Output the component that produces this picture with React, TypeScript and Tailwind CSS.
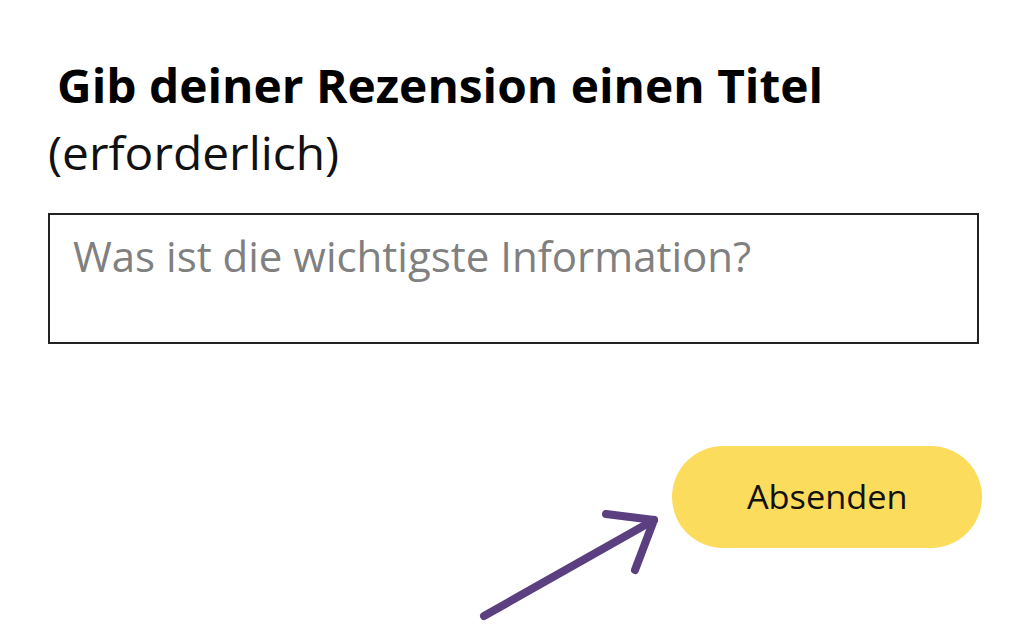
export default function App() {
  return (
    <div
      className="relative w-[1024px] h-[641px] overflow-hidden bg-white pl-[48px] pt-[59px]"
      style={{ fontFamily: '"Open Sans", "Noto Sans", sans-serif' }}
    >
      <h1 className="ml-[9px] text-[46px] font-bold leading-[52px] text-black">
        <span className="inline-block origin-left scale-x-[1.04] whitespace-nowrap">
          Gib deiner Rezension einen Titel
        </span>
      </h1>
      <p className="mt-[13px] text-[46px] leading-[56px] text-[#111]">
        <span className="inline-block origin-left scale-x-[1.04]">(erforderlich)</span>
      </p>

      <div className="mt-[33px] w-[931px] h-[131px] border-2 border-[#222] px-[23px] pt-[11px]">
        <input
          className="w-full bg-transparent text-[42px] leading-[60px] text-[#333] placeholder:text-[#808080] outline-none"
          placeholder="Was ist die wichtigste Information?"
        />
      </div>

      <div className="mt-[102px] flex justify-end pr-[42px]">
        <button className="w-[310px] h-[102px] rounded-full bg-[#fcdc5c] text-[33px] text-[#111]">
          <span className="inline-block scale-x-[1.04]">Absenden</span>
        </button>
      </div>

      <svg
        className="absolute left-[470px] top-[500px]"
        width="200"
        height="141"
        viewBox="0 0 200 141"
        fill="none"
      >
        <g stroke="#5b3f80" strokeWidth="8" strokeLinecap="round" strokeLinejoin="round">
          <path d="M14 116 L184 20" />
          <path d="M136 14 L184 20 L165 70" />
        </g>
      </svg>
    </div>
  )
}
